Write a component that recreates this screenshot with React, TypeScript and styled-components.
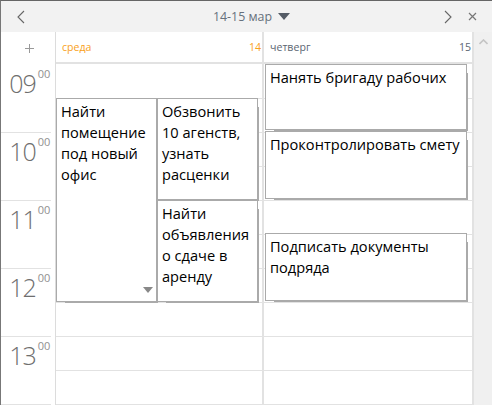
import React from "react";
import styled, { createGlobalStyle } from "styled-components";

const Global = createGlobalStyle`
  html, body { margin: 0; padding: 0; background: #fff; }
  #root { width: 492px; height: 405px; overflow: hidden; }
  * { box-sizing: border-box; }
`;

const Win = styled.div`
  width: 492px; height: 405px; display: flex; flex-direction: column; overflow: hidden;
  border-top: 1px solid #666; border-left: 1px solid #777;
  font-family: "Open Sans", "Noto Sans", sans-serif; background: #fff;
`;
const TitleBar = styled.div`
  height: 31px; flex: none; background: #f2f2f2; display: flex; align-items: center; padding-right: 8px;
`;
const NavBtn = styled.button<{ $w: number }>`
  width: ${(p) => p.$w}px; height: 31px; padding: 0; border: 0; background: none; flex: none;
  display: flex; align-items: center; justify-content: center;
`;
const Title = styled.div`
  flex: 1; display: flex; align-items: center; justify-content: center; gap: 6px;
  font-size: 12.4px; color: #66707c; padding-left: 27px;
`;
const Body = styled.div`
  flex: 1; display: flex; min-height: 0;
`;
const TimeCol = styled.div`
  width: 54px; flex: none; display: flex; flex-direction: column;
`;
const AddCell = styled.div`
  height: 33px; flex: none; display: flex; align-items: center; justify-content: center; padding: 0 0 1px 3px;
`;
const Hour = styled.div`
  height: 68px; flex: none; display: flex; justify-content: flex-end; align-items: flex-start;
  padding-right: 1px; border-bottom: 1px solid #e2e2e2; margin-right: 4px;
  color: #6e6e6e; font-weight: 300; font-size: 25px; line-height: 38px; letter-spacing: -1px;
`;
const HourNum = styled.span`
  margin-top: -1px;
`;
const Minutes = styled.span`
  font-size: 11px; line-height: 12px; margin: 3px 0 0 2px; color: #909090; font-weight: 400; letter-spacing: -0.2px;
`;
const Days = styled.div`
  flex: none; width: 419px; display: flex; border-left: 1px solid #dcdcdc;
`;
const Day = styled.div<{ $w: number }>`
  width: ${(p) => p.$w}px; flex: none; display: flex; flex-direction: column;
  border-right: 2px solid #e2e2e2;
`;
const DayHead = styled.div<{ $accent?: boolean }>`
  height: 32px; flex: none; display: flex; justify-content: space-between; align-items: flex-start;
  padding: 7px 1px 0 6px; font-size: 10.6px; line-height: 16px; border-bottom: 2px solid #e2e2e2;
  color: ${(p) => (p.$accent ? "#f9a11b" : "#5c6672")};
`;
const Slots = styled.div`
  flex: 1; position: relative; padding-top: 1px; background-clip: content-box;
  background-image: repeating-linear-gradient(to bottom, #e2e2e2 0, #e2e2e2 1px, transparent 1px, transparent 34px);
`;
const Card = styled.div<{ $x: number; $y: number; $w: number; $h: number }>`
  position: absolute; left: ${(p) => p.$x}px; top: ${(p) => p.$y}px; width: ${(p) => p.$w}px; height: ${(p) => p.$h}px;
  background: #fff; border: 1px solid #aaa; box-shadow: 5px 5px 0 -4px #aaa;
  padding: 2px 2px 2px 4px; font-size: 14.6px; line-height: 21px; color: #000;
`;
const Fold = styled.span`
  position: absolute; right: 3px; bottom: 8px; width: 0; height: 0;
  border-left: 5px solid transparent; border-right: 5px solid transparent; border-top: 6px solid #888;
`;
const Scrollbar = styled.div`
  flex: 1; background: #f0f0f0; display: flex; justify-content: center; padding-top: 7px; align-items: flex-start;
`;

const hours = ["09", "10", "11", "12", "13"];

export default function App() {
  return (
    <Win>
      <Global />
      <TitleBar>
        <NavBtn $w={39}>
          <svg width="9" height="14" viewBox="0 0 9 14"><path d="M8 1 2 7l6 6" fill="none" stroke="#666" strokeWidth="1.1" /></svg>
        </NavBtn>
        <Title>
          14-15 мар
          <svg width="12" height="7" viewBox="0 0 12 7"><path d="M0 0h12L6 7z" fill="#555c66" /></svg>
        </Title>
        <NavBtn $w={24}>
          <svg width="9" height="14" viewBox="0 0 9 14"><path d="M1 1l6 6-6 6" fill="none" stroke="#666" strokeWidth="1.1" /></svg>
        </NavBtn>
        <NavBtn $w={24}>
          <svg width="9" height="9" viewBox="0 0 9 9"><path d="M1 1l7 7M8 1 1 8" fill="none" stroke="#777" strokeWidth="1.2" /></svg>
        </NavBtn>
      </TitleBar>
      <Body>
        <TimeCol>
          <AddCell>
            <svg width="11" height="11" viewBox="0 0 11 11"><path d="M5.5 1v9M1 5.5h9" stroke="#999" strokeWidth="1" /></svg>
          </AddCell>
          {hours.map((h) => (
            <Hour key={h}>
              <HourNum>{h}</HourNum>
              <Minutes>00</Minutes>
            </Hour>
          ))}
        </TimeCol>
        <Days>
          <Day $w={208}>
            <DayHead $accent><span>среда</span><span>14</span></DayHead>
            <Slots>
              <Card $x={0} $y={34} $w={101} $h={204}>
                Найти помещение под новый офис
                <Fold />
              </Card>
              <Card $x={101} $y={34} $w={101} $h={102}>Обзвонить 10 агенств, узнать расценки</Card>
              <Card $x={101} $y={136} $w={101} $h={102}>Найти объявления о сдаче в аренду</Card>
            </Slots>
          </Day>
          <Day $w={210}>
            <DayHead><span>четверг</span><span>15</span></DayHead>
            <Slots>
              <Card $x={1} $y={0} $w={202} $h={66}>Нанять бригаду рабочих</Card>
              <Card $x={1} $y={67} $w={202} $h={68}>Проконтролировать смету</Card>
              <Card $x={1} $y={169} $w={202} $h={68}>Подписать документы подряда</Card>
            </Slots>
          </Day>
        </Days>
        <Scrollbar>
          <svg width="9" height="6" viewBox="0 0 9 6"><path d="M0.5 5 4.5 1l4 4" fill="none" stroke="#c4c4c4" strokeWidth="1.6" /></svg>
        </Scrollbar>
      </Body>
    </Win>
  );
}
